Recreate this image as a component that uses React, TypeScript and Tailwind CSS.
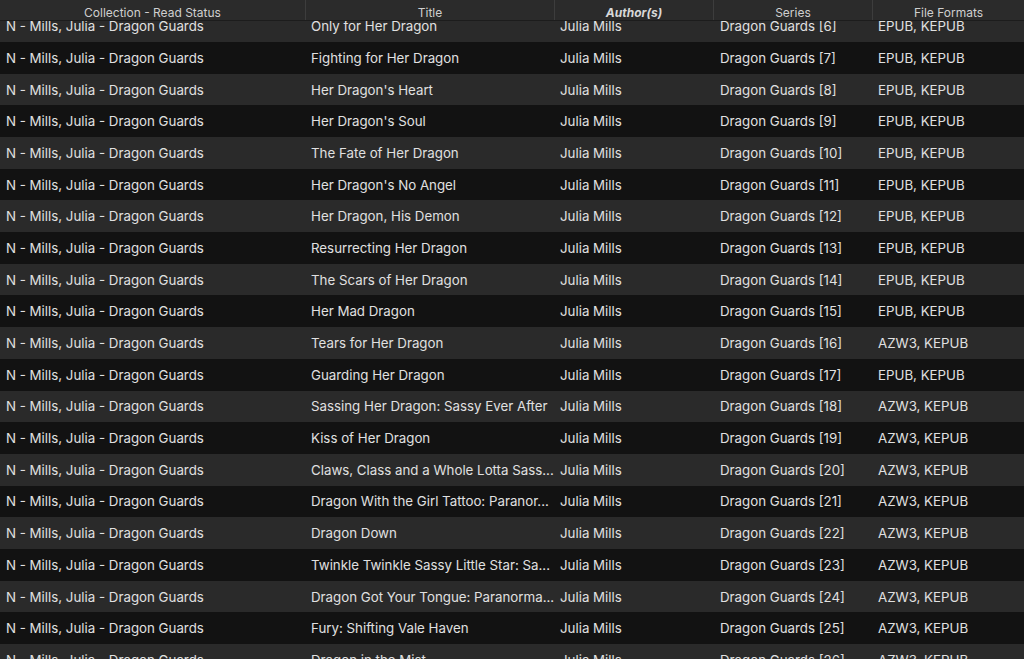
import React from "react";

type Book = {
  title: string;
  series: number;
  formats: string;
};

const books: Book[] = [
  { title: "Only for Her Dragon", series: 6, formats: "EPUB, KEPUB" },
  { title: "Fighting for Her Dragon", series: 7, formats: "EPUB, KEPUB" },
  { title: "Her Dragon's Heart", series: 8, formats: "EPUB, KEPUB" },
  { title: "Her Dragon's Soul", series: 9, formats: "EPUB, KEPUB" },
  { title: "The Fate of Her Dragon", series: 10, formats: "EPUB, KEPUB" },
  { title: "Her Dragon's No Angel", series: 11, formats: "EPUB, KEPUB" },
  { title: "Her Dragon, His Demon", series: 12, formats: "EPUB, KEPUB" },
  { title: "Resurrecting Her Dragon", series: 13, formats: "EPUB, KEPUB" },
  { title: "The Scars of Her Dragon", series: 14, formats: "EPUB, KEPUB" },
  { title: "Her Mad Dragon", series: 15, formats: "EPUB, KEPUB" },
  { title: "Tears for Her Dragon", series: 16, formats: "AZW3, KEPUB" },
  { title: "Guarding Her Dragon", series: 17, formats: "EPUB, KEPUB" },
  { title: "Sassing Her Dragon: Sassy Ever After", series: 18, formats: "AZW3, KEPUB" },
  { title: "Kiss of Her Dragon", series: 19, formats: "AZW3, KEPUB" },
  { title: "Claws, Class and a Whole Lotta Sass...", series: 20, formats: "AZW3, KEPUB" },
  { title: "Dragon With the Girl Tattoo: Paranor...", series: 21, formats: "AZW3, KEPUB" },
  { title: "Dragon Down", series: 22, formats: "AZW3, KEPUB" },
  { title: "Twinkle Twinkle Sassy Little Star: Sa...", series: 23, formats: "AZW3, KEPUB" },
  { title: "Dragon Got Your Tongue: Paranorma...", series: 24, formats: "AZW3, KEPUB" },
  { title: "Fury: Shifting Vale Haven", series: 25, formats: "AZW3, KEPUB" },
  { title: "Dragon in the Mist", series: 26, formats: "AZW3, KEPUB" },
];

const cols = "grid grid-cols-[306px_249px_159px_159px_1fr]";

const HeaderCell = ({
  label,
  sorted,
  last,
}: {
  label: string;
  sorted?: boolean;
  last?: boolean;
}) => {
  return (
    <div
      className={`flex items-center justify-center truncate pt-[6px] ${
        last ? "" : "border-r border-[#3d3d3d]"
      } ${sorted ? "font-bold italic text-[#d8d8d8]" : "text-[#cfcfcf]"}`}
    >
      {label}
    </div>
  );
};

export default function App() {
  return (
    <div
      className="relative h-[659px] w-[1024px] overflow-hidden bg-[#121212] text-[13.3px] text-[#e0e0e0]"
      style={{ fontFamily: "Inter, 'Liberation Sans', sans-serif" }}
    >
      {/* column header, sits over the scrolled rows */}
      <div
        className={`${cols} absolute inset-x-0 top-0 z-10 h-[21px] border-b border-[#1c1c1c] bg-[#2b2b2b] text-[12px]`}
      >
        <HeaderCell label="Collection - Read Status" />
        <HeaderCell label="Title" />
        <HeaderCell label="Author(s)" sorted />
        <HeaderCell label="Series" />
        <HeaderCell label="File Formats" last />
      </div>

      {/* rows */}
      <div className="pt-[10.3px]">
        {books.map((b, i) => (
          <div
            key={b.series}
            className={`${cols} h-[31.7px] items-center pt-[2px] ${
              i % 2 === 0 ? "bg-[#2a2a2a]" : "bg-[#121212]"
            }`}
          >
            <div className="truncate pl-[6px]">N - Mills, Julia - Dragon Guards</div>
            <div className="overflow-hidden whitespace-nowrap pl-[5px]">{b.title}</div>
            <div className="truncate pl-[5px]">Julia Mills</div>
            <div className="truncate pl-[6px]">Dragon Guards [{b.series}]</div>
            <div className="truncate pl-[5px]">{b.formats}</div>
          </div>
        ))}
      </div>
    </div>
  );
}
